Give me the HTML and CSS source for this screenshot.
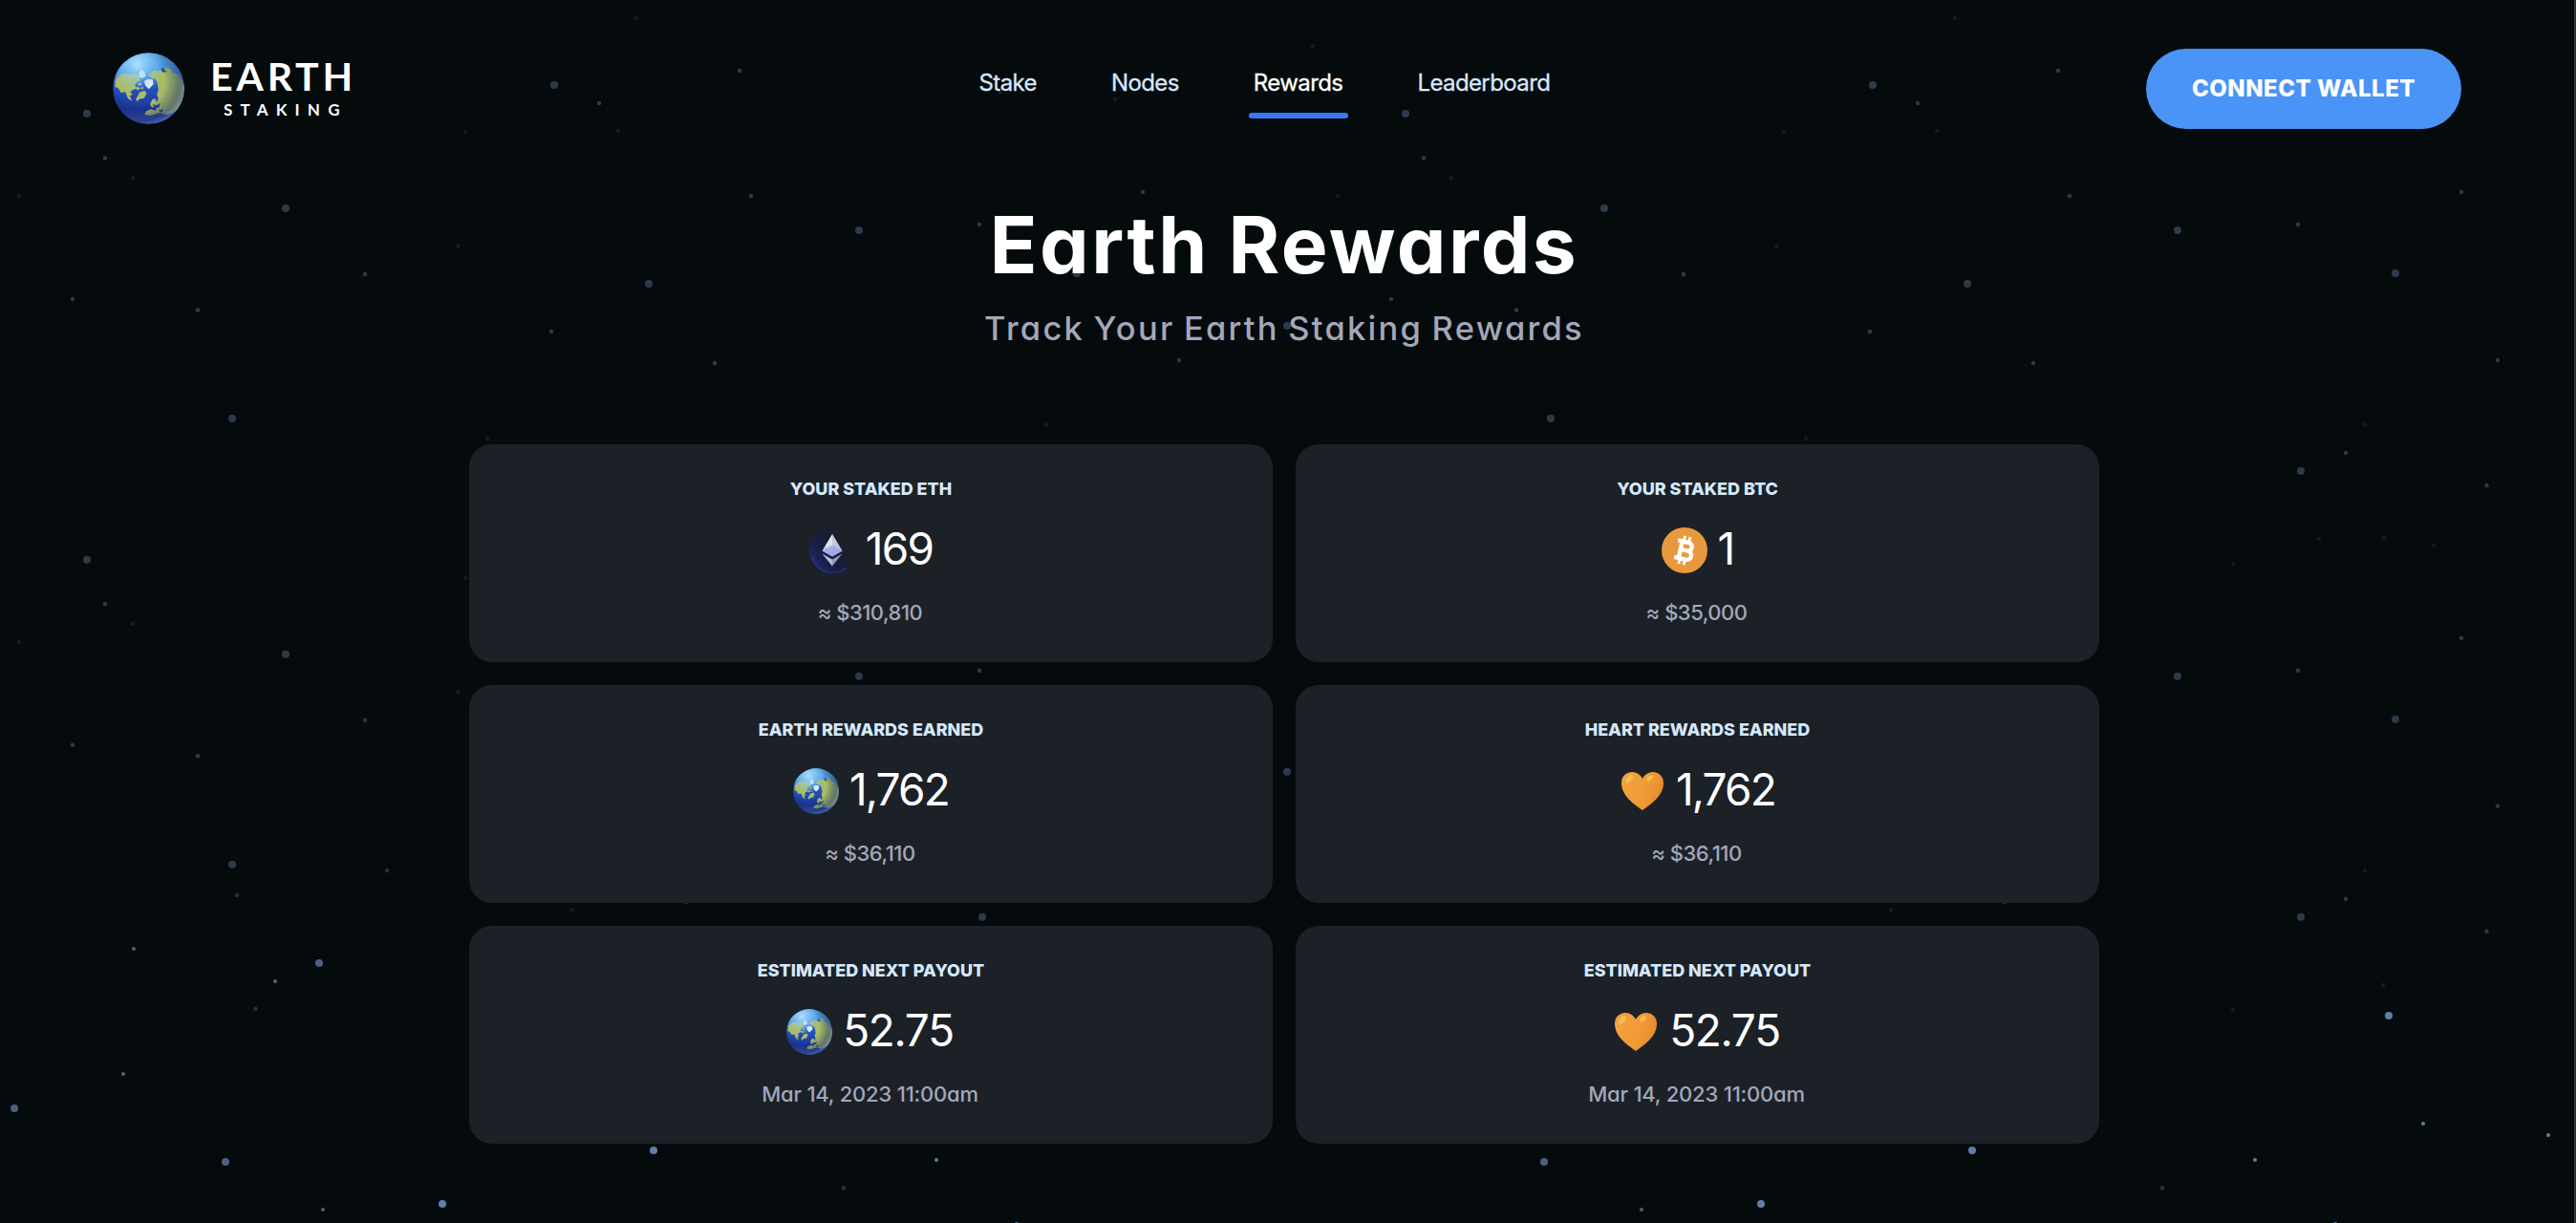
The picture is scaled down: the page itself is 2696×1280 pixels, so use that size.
FILE: index.html
```html
<!DOCTYPE html>
<html lang="en">
<head>
<meta charset="utf-8">
<title>Earth Rewards</title>
<link rel="stylesheet" href="styles.css">
</head>
<body>
<svg class="stars" width="2696" height="1280" aria-hidden="true">
  <defs>
    <g id="star-field">
      <g class="star-soft">
        <circle cx="91" cy="119" r="4"/><circle cx="299" cy="218" r="4"/><circle cx="580" cy="89" r="4"/>
        <circle cx="679" cy="297" r="4"/><circle cx="243" cy="438" r="4"/><circle cx="899" cy="241" r="4"/>
        <circle cx="1127" cy="286" r="4"/><circle cx="1347" cy="341" r="4"/>
        <circle cx="110" cy="165.500" r="2.200"/><circle cx="627" cy="108" r="2.200"/><circle cx="382" cy="287" r="2.200"/>
        <circle cx="76" cy="313" r="2.200"/><circle cx="207" cy="324.500" r="2.200"/><circle cx="577" cy="347" r="2.200"/>
        <circle cx="774" cy="74" r="2.200"/><circle cx="786" cy="205" r="2.200"/><circle cx="1025" cy="235" r="2.200"/>
        <circle cx="1196" cy="201" r="2.200"/><circle cx="1234" cy="377" r="2.200"/><circle cx="748" cy="380" r="2.200"/>
      </g>
      <g class="star-dim">
        <circle cx="139" cy="186" r="2.200"/><circle cx="20" cy="205" r="2.200"/><circle cx="487" cy="138" r="2.200"/>
        <circle cx="647" cy="137" r="2.200"/><circle cx="666" cy="18.500" r="2.200"/><circle cx="479.500" cy="257.500" r="2.200"/>
        <circle cx="510" cy="459" r="2.200"/><circle cx="1047" cy="97" r="2.200"/><circle cx="1167" cy="104" r="2.200"/>
        <circle cx="1374" cy="48" r="2.200"/><circle cx="1095" cy="444.500" r="2.200"/>
      </g>
    </g>
    <g id="star-fringe">
      <circle class="star-soft" cx="1028" cy="493" r="4"/>
      <circle class="star-soft" cx="1075" cy="474" r="2.200"/>
      <circle class="star-soft" cx="1222.500" cy="508" r="2.200"/>
    </g>
    <pattern id="sky" width="1380" height="1280" patternUnits="userSpaceOnUse">
      <use href="#star-field"/>
      <use href="#star-field" y="466.700"/>
      <use href="#star-fringe"/>
      <use href="#star-fringe" y="466.700"/>
      <g class="star-dim">
        <circle cx="1115" cy="563.500" r="2.200"/><circle cx="957.500" cy="590" r="2.200"/>
        <circle cx="599" cy="952" r="2.200"/><circle cx="957" cy="1057" r="2.200"/><circle cx="1114" cy="1031" r="2.200"/>
      </g>
      <g class="star-mid">
        <circle cx="248" cy="937" r="2.200"/><circle cx="405" cy="911" r="2.200"/><circle cx="718" cy="944" r="2.200"/>
        <circle cx="267.500" cy="1056" r="2.200"/><circle cx="883" cy="1243.500" r="2.200"/>
      </g>
      <g class="star-bright">
        <circle cx="334" cy="1008" r="4"/><circle cx="15" cy="1160" r="4"/><circle cx="236" cy="1216" r="4"/>
        <circle cx="140" cy="993" r="2"/><circle cx="288" cy="1027" r="2"/><circle cx="129" cy="1124" r="2"/><circle cx="338" cy="1266" r="2"/>
      </g>
      <g class="star-glow">
        <circle cx="684" cy="1204" r="4"/><circle cx="463" cy="1260" r="4"/><circle cx="1120" cy="1063" r="4"/>
        <circle cx="980" cy="1214" r="2"/><circle cx="1156" cy="1176" r="2"/><circle cx="1287" cy="1188" r="2"/><circle cx="1064" cy="1281" r="2"/>
      </g>
    </pattern>

    <linearGradient id="ocean" x1="0" y1="0" x2="0" y2="1">
      <stop offset="0" stop-color="#62b4ee"/><stop offset=".28" stop-color="#4a98e4"/>
      <stop offset=".48" stop-color="#2454bd"/><stop offset=".8" stop-color="#1c3596"/><stop offset="1" stop-color="#4a62bd"/>
    </linearGradient>
    <radialGradient id="shine" cx=".34" cy=".16" r=".38">
      <stop offset="0" stop-color="#b4e2ff" stop-opacity=".95"/><stop offset="1" stop-color="#7cc4f8" stop-opacity="0"/>
    </radialGradient>
    <radialGradient id="shade" cx=".38" cy=".4" r=".68">
      <stop offset=".5" stop-color="#0b1c52" stop-opacity="0"/><stop offset=".82" stop-color="#1a2d6c" stop-opacity=".5"/>
      <stop offset="1" stop-color="#6c84d8" stop-opacity=".6"/>
    </radialGradient>
    <clipPath id="disc"><circle cx="137" cy="126.500" r="112"/></clipPath>
    <symbol id="earth" viewBox="25 14 224 225">
      <g clip-path="url(#disc)">
        <path fill="url(#ocean)" d="M25 14h224v225H25z"/>
        <g fill="#a9bd68">
          <path d="M31 122L34 98L46 84L62 79L78 82L101 79L107 92L113 101L101 106L94 116L99 127L88 131L80 138L87 146L78 150L85 166L72 158L64 138L50 140L42 126Z"/>
          <path d="M110 138L125 134L131 142L123 157L108 160L101 168L97 160Z"/>
          <path d="M101 112l9-4 6 6-7 5zM96 124l8-3 7 6-8 6zM112 124l7-2 2 6-6 2z"/>
          <path d="M134 84L144 80L156 68L165 72L178 70L190 60L206 64L214 78L232 84L250 118L249 160L226 196L198 210L170 204L142 212L124 208L130 198L144 192L158 196L163 186L146 186L142 176L148 162L158 158L161 170L168 158L163 146L168 130L165 112L160 98L146 94Z"/>
        </g>
        <path fill="#24479f" d="M175 64l14-2-4 6 10 6-14 2zM150 176l12 4 12-8-4 14-14 4zM168 196l16-5-6 12z"/>
        <path fill="#e4eefb" d="M107 78L114 66L124 74L128 88L117 94L106 90ZM123 104L134 97L150 99L152 114L138 129L127 118Z"/>
        <circle cx="137" cy="126.500" r="112" fill="url(#shade)"/>
        <circle cx="137" cy="126.500" r="112" fill="url(#shine)"/>
      </g>
    </symbol>

    <linearGradient id="eth-rim" x1="0" y1=".75" x2=".75" y2=".25">
      <stop offset="0" stop-color="#20286a"/><stop offset=".5" stop-color="#171c3c"/><stop offset="1" stop-color="#1d1f25"/>
    </linearGradient>
    <linearGradient id="eth-gem" x1="0" y1="0" x2="0" y2="1">
      <stop offset="0" stop-color="#f3e4ee"/><stop offset=".45" stop-color="#dbe6ea"/><stop offset="1" stop-color="#a3abea"/>
    </linearGradient>
    <symbol id="eth" viewBox="0 0 48 48">
      <circle cx="24" cy="24" r="24" fill="url(#eth-rim)"/>
      <path d="M3 30a22 22 0 0 0 36 12" fill="none" stroke="#2b3585" stroke-width="2.500" opacity=".55"/>
      <path fill="url(#eth-gem)" d="M24 7l10.500 17.500L24 30.500l-10.500-6z"/>
      <path fill="#b3b2cf" opacity=".6" d="M24 7l10.500 17.500L24 30.500z"/>
      <path fill="#94a0ea" opacity=".65" d="M24 18.500l10.500 6-10.500 6-10.500-6z"/>
      <path fill="#bdb8dc" d="M13.500 27.500L24 33.500v7z"/>
      <path fill="#9a95c2" d="M34.500 27.500L24 33.500v7z"/>
    </symbol>

    <symbol id="btc" viewBox="0 0 48 48">
      <circle cx="24" cy="24" r="24" fill="#e9993d"/>
      <g transform="rotate(13 24 24)" fill="none" stroke="#fff">
        <path stroke-width="4.400" d="M15 15.200h11.500a4.300 4.300 0 0 1 0 8.600H20h7.500a4.700 4.700 0 0 1 0 9.400H15M19.700 15v18"/>
        <path stroke-width="2.800" d="M21.200 9v6M26.600 9v6M21.200 33v6M26.600 33v6"/>
      </g>
    </symbol>

    <linearGradient id="heart-fill" x1="0" y1="0" x2="1" y2=".3">
      <stop offset="0" stop-color="#f2a43c"/><stop offset=".7" stop-color="#f09a36"/><stop offset="1" stop-color="#e88b2d"/>
    </linearGradient>
    <symbol id="heart" viewBox="0 0 48 48">
      <path fill="url(#heart-fill)" d="M24 44C15 37.500 2 29 2 15.500C2 8 7.500 4 13 4C18 4 22 7 24 11C26 7 30 4 35 4C40.500 4 46 8 46 15.500C46 29 33 37.500 24 44Z"/>
      <ellipse cx="10" cy="11.500" rx="5" ry="2.800" transform="rotate(-52 10 11.500)" fill="#f6bc55"/>
      <ellipse cx="31.500" cy="10.500" rx="3.800" ry="2.200" transform="rotate(-45 31.500 10.500)" fill="#f6bc55"/>
    </symbol>
  </defs>
  <rect width="2696" height="1280" fill="url(#sky)"/>
</svg>

<div class="page">
  <header class="header">
    <a class="brand">
      <svg class="brand-globe"><use href="#earth"/></svg>
      <span class="brand-text">
        <span class="brand-name">EARTH</span>
        <span class="brand-tag">STAKING</span>
      </span>
    </a>
    <nav class="nav">
      <a class="nav-link">Stake</a>
      <a class="nav-link">Nodes</a>
      <a class="nav-link active">Rewards</a>
      <a class="nav-link">Leaderboard</a>
    </nav>
    <button class="connect">CONNECT WALLET</button>
  </header>

  <main class="main">
    <h1 class="title">Earth Rewards</h1>
    <p class="subtitle">Track Your Earth Staking Rewards</p>
    <section class="cards">
      <article class="card">
        <h2 class="label">YOUR STAKED ETH</h2>
        <div class="value"><svg class="icon"><use href="#eth"/></svg><span>169</span></div>
        <p class="note">≈ $310,810</p>
      </article>
      <article class="card">
        <h2 class="label">YOUR STAKED BTC</h2>
        <div class="value"><svg class="icon"><use href="#btc"/></svg><span>1</span></div>
        <p class="note">≈ $35,000</p>
      </article>
      <article class="card">
        <h2 class="label">EARTH REWARDS EARNED</h2>
        <div class="value"><svg class="icon"><use href="#earth"/></svg><span>1,762</span></div>
        <p class="note">≈ $36,110</p>
      </article>
      <article class="card">
        <h2 class="label">HEART REWARDS EARNED</h2>
        <div class="value"><svg class="icon"><use href="#heart"/></svg><span>1,762</span></div>
        <p class="note">≈ $36,110</p>
      </article>
      <article class="card">
        <h2 class="label">ESTIMATED NEXT PAYOUT</h2>
        <div class="value payout"><svg class="icon"><use href="#earth"/></svg><span>52.75</span></div>
        <p class="note date">Mar 14, 2023 11:00am</p>
      </article>
      <article class="card">
        <h2 class="label">ESTIMATED NEXT PAYOUT</h2>
        <div class="value payout"><svg class="icon"><use href="#heart"/></svg><span>52.75</span></div>
        <p class="note date">Mar 14, 2023 11:00am</p>
      </article>
    </section>
  </main>
</div>
</body>
</html>
```
FILE: styles.css
```css
* { box-sizing: border-box; }

body {
  margin: 0;
  background: #050a0c;
  color: #fff;
  font-family: Inter, "Liberation Sans", sans-serif;
  overflow: hidden;
}

h1, h2, p { margin: 0; }

.stars { position: absolute; inset: 0; }
.star-soft { fill: #2c3a4c; }
.star-dim { fill: #151a22; }
.star-mid { fill: #27303f; }
.star-bright { fill: #4b6180; }
.star-glow { fill: #5f7fa9; }

.page {
  position: relative;
  min-height: 1280px;
  border-right: 2px solid #333638;
}

.header {
  display: flex;
  align-items: flex-start;
  height: 180px;
  padding: 51px 118px 0;
}

.brand {
  display: flex;
  gap: 27px;
  width: 250px;
  margin-top: 3.5px;
}
.brand-globe { flex: none; width: 75px; height: 75px; }
.brand-text {
  display: flex;
  flex-direction: column;
  gap: 5px;
  padding-top: 5px;
  font-family: Lato, "Liberation Sans", sans-serif;
  font-weight: 700;
}
.brand-name { font-size: 41px; line-height: 40px; letter-spacing: 3.8px; }
.brand-tag { padding-left: 14px; font-size: 17px; line-height: 20px; letter-spacing: 8.2px; }

.nav {
  display: flex;
  gap: 78px;
  margin: 20px 0 0 656.5px;
}
.nav-link {
  position: relative;
  color: #d6e8fd;
  font-size: 24px;
  line-height: 32px;
  letter-spacing: -0.6px;
  -webkit-text-stroke: 0.3px currentColor;
}
.nav-link.active { color: #fff; }
.nav-link.active::after {
  content: "";
  position: absolute;
  left: -5px;
  right: -6px;
  top: 47px;
  height: 6px;
  border-radius: 3px;
  background: #3b78f8;
}

.connect {
  width: 330px;
  height: 84px;
  margin-left: auto;
  padding: 0;
  border: 0;
  border-radius: 42px;
  background: #4a93f7;
  color: #fff;
  font: 800 24px/1 Inter, "Liberation Sans", sans-serif;
  letter-spacing: 0.5px;
}

.main {
  width: 1706px;
  margin-left: 491px;
  padding-top: 27px;
  text-align: center;
  font-feature-settings: "cv11";
}
.title {
  font-size: 82px;
  font-weight: 700;
  line-height: 100px;
  letter-spacing: 2.4px;
  word-spacing: -2px;
}
.subtitle {
  margin-top: 13px;
  color: #a4a7b9;
  font-size: 34.5px;
  font-weight: 500;
  line-height: 48px;
  letter-spacing: 2.25px;
  word-spacing: -2px;
}

.cards {
  display: grid;
  grid-template-columns: 1fr 1fr;
  gap: 24px;
  margin-top: 97px;
}
.card {
  height: 228px;
  padding-top: 35px;
  border-radius: 24px;
  background: #1b2127;
}
.label {
  color: #d6e8fd;
  font-size: 18px;
  font-weight: 800;
  line-height: 24px;
  letter-spacing: -0.02px;
}
.value {
  display: flex;
  justify-content: center;
  gap: 11px;
  height: 48px;
  margin-top: 28px;
  font-size: 46px;
  line-height: 44px;
  letter-spacing: -1.8px;
}
.payout { padding-right: 2px; letter-spacing: -1.3px; }
.icon { width: 48px; height: 48px; }
.note {
  margin-top: 28px;
  padding-right: 2px;
  color: #a4a7b9;
  font-size: 22px;
  font-weight: 500;
  line-height: 26px;
  letter-spacing: -0.5px;
}
.date { letter-spacing: -0.2px; }
```
